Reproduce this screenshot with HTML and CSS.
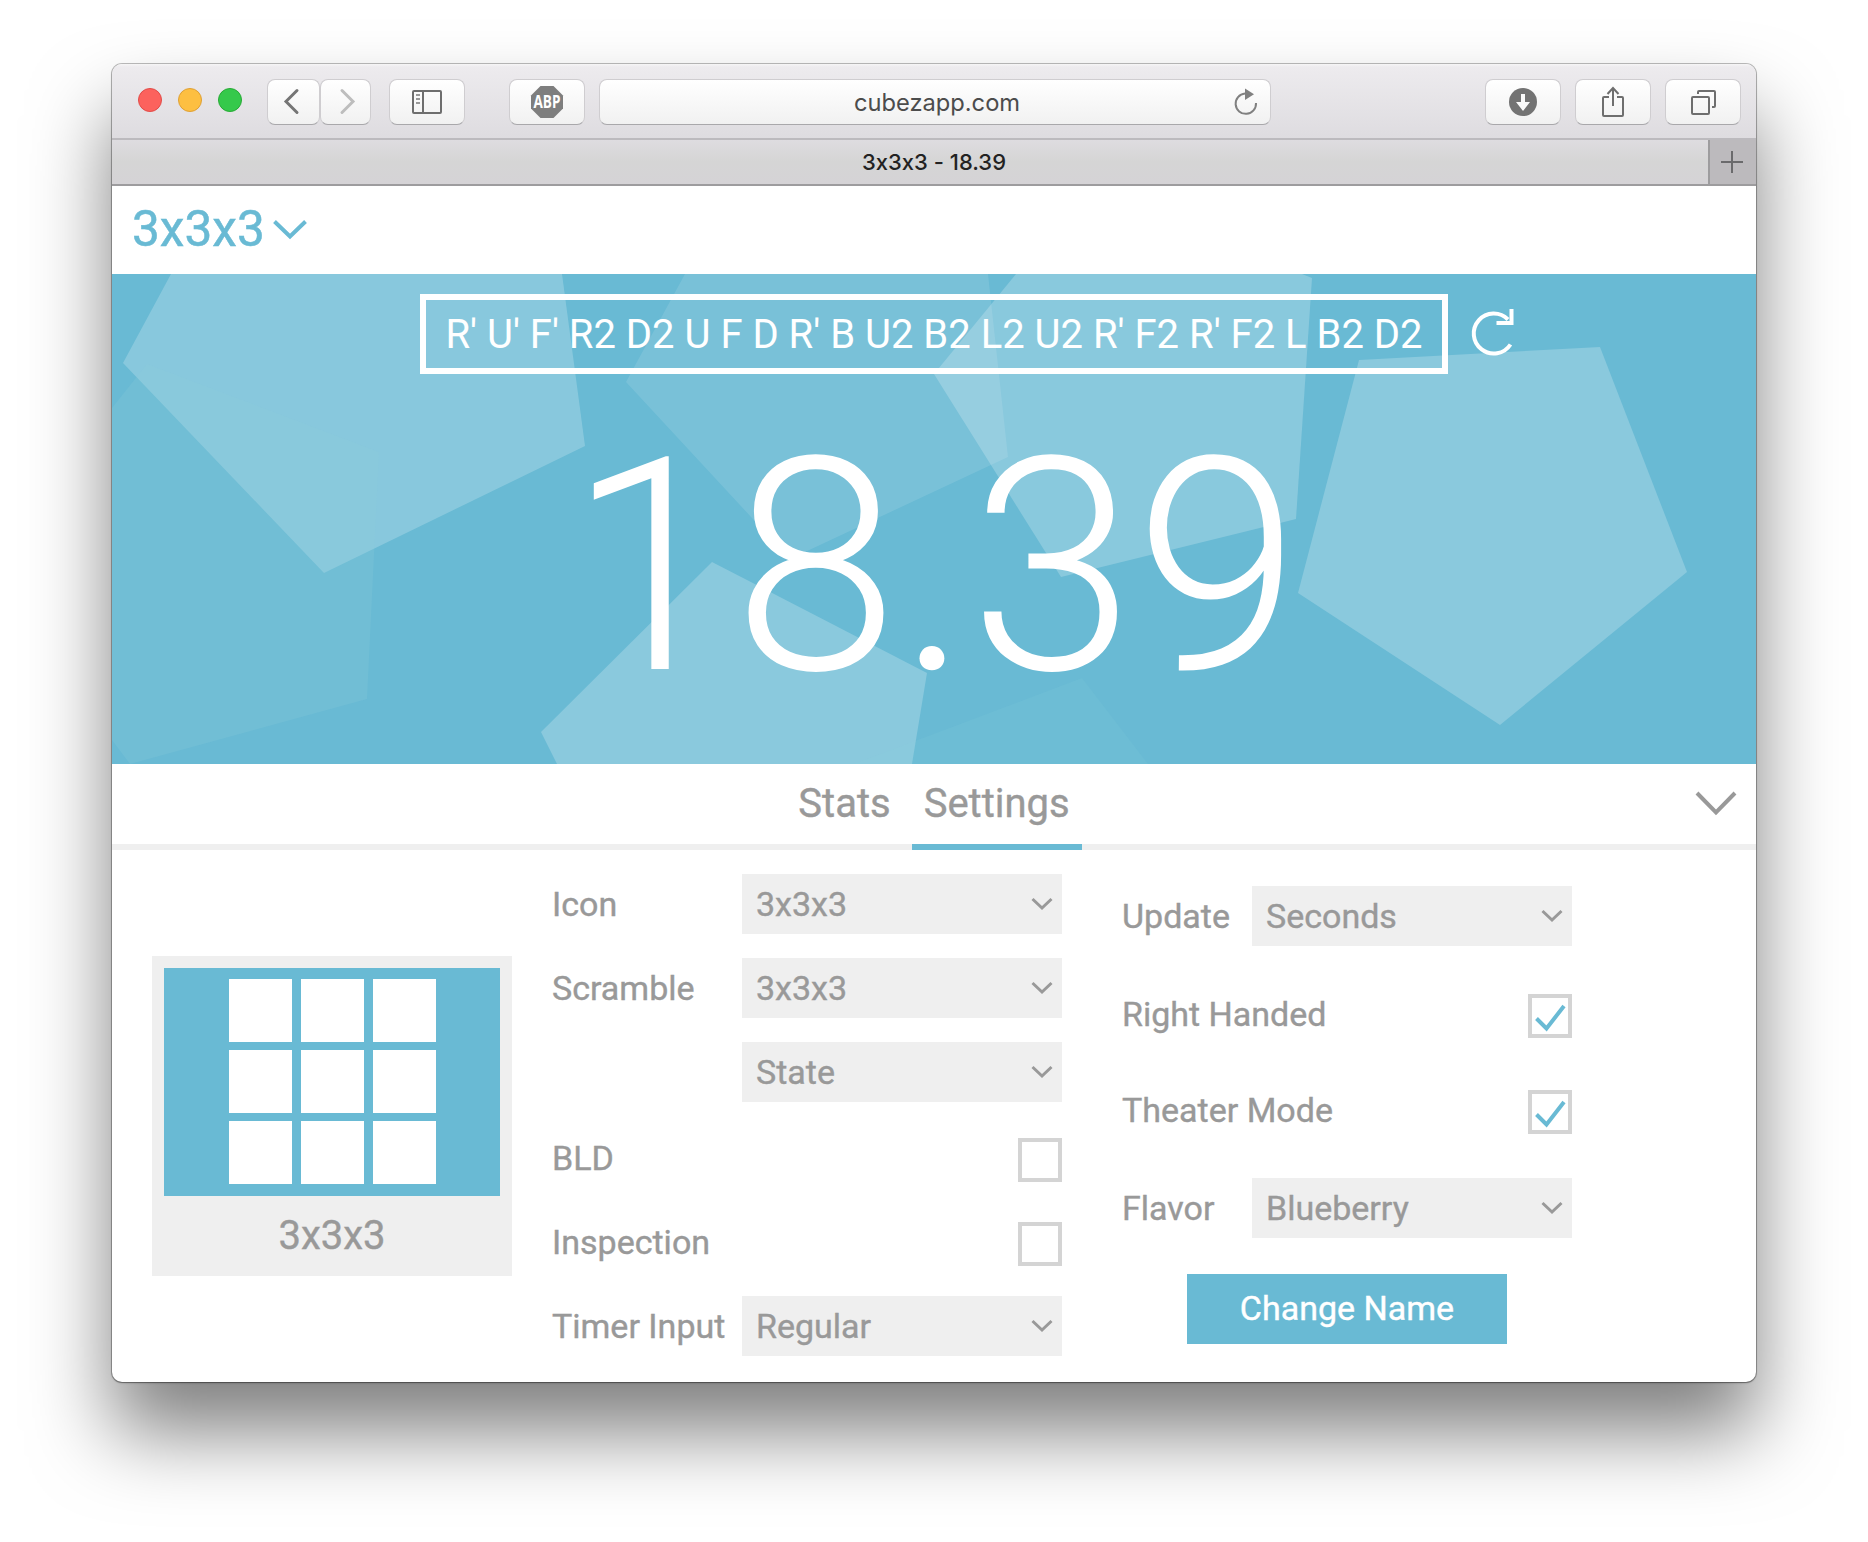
FILE: index.html
```html
<!DOCTYPE html>
<html lang="en">
<head>
<meta charset="utf-8">
<title>3x3x3 - 18.39</title>
<link rel="stylesheet" href="styles.css">
</head>
<body>
<div class="window">
  <header class="toolbar">
    <div class="lights"><i class="light red"></i><i class="light yellow"></i><i class="light green"></i></div>
    <div class="btn back"><svg width="52" height="44" fill="none" stroke="#757575" stroke-width="3" stroke-linecap="round"><path d="M29 10.500L18 21.500L29 32.500"/></svg></div>
    <div class="btn forward"><svg width="50" height="44" fill="none" stroke="#bdbdbd" stroke-width="3" stroke-linecap="round"><path d="M21 10.500L32 21.500L21 32.500"/></svg></div>
    <div class="btn sidebar"><svg width="30" height="24" fill="none" stroke="#6e6e6e" stroke-width="2"><rect x="1" y="1" width="28" height="22" rx="1"/><path d="M11 1V23"/><path d="M4 5H8M4 9H8M4 13H8" stroke="#999"/></svg></div>
    <div class="btn abp"><svg width="32" height="32"><path d="M9.500 0H22.500L32 9.500V22.500L22.500 32H9.500L0 22.500V9.500Z" fill="#7e7e7e"/><text class="abp-text" x="16" y="22" text-anchor="middle" textLength="27" lengthAdjust="spacingAndGlyphs">ABP</text></svg></div>
    <div class="url"><span>cubezapp.com</span>
      <svg class="reload" width="24" height="28" fill="none" stroke="#808080" stroke-width="2"><path d="M11 5.500A10.200 10.200 0 1 0 22 15"/><path d="M11 0.500V12L20 6.200Z" fill="#808080" stroke="none"/></svg>
    </div>
    <div class="btn download"><svg width="28" height="28"><circle cx="14" cy="14" r="14" fill="#737373"/><path d="M12 6H16V14H21L14 23L7 14H12Z" fill="#fafafa"/></svg></div>
    <div class="btn share"><svg width="24" height="32" fill="none" stroke="#6e6e6e" stroke-width="2"><path d="M8 11H3Q2 11 2 12V29Q2 30 3 30H21Q22 30 22 29V12Q22 11 21 11H16M12 20V2M6.500 8L12 2L17.500 8"/></svg></div>
    <div class="btn tabs"><svg width="26" height="26" fill="none" stroke="#6e6e6e" stroke-width="2"><rect x="2" y="8" width="17" height="17" rx="1"/><path d="M8 5V3Q8 2 9 2H24Q25 2 25 3V17Q25 18 24 18H22"/></svg></div>
  </header>
  <div class="tabbar">
    <div class="tab-title">3x3x3 - 18.39</div>
    <div class="tab-add"><svg width="22" height="22" stroke="#6a6a6c" stroke-width="2"><path d="M11 0V22M0 11H22"/></svg></div>
  </div>
  <div class="event">
    <span>3x3x3</span>
    <svg width="34" height="20" fill="none" stroke="#69bad4" stroke-width="4"><path d="M1.500 1.500L17 16.500L32.500 1.500"/></svg>
  </div>
  <section class="hero">
    <svg class="shapes" width="1644" height="490">
      <g fill="#fff">
        <path fill-opacity=".21" d="M59 0L11 89L212 299L473 172L450 0Z"/>
        <path fill="#8ccbdc" fill-opacity=".22" d="M35 90L267 178L255 425L18 490L0 466V134Z"/>
        <path fill-opacity=".11" d="M573 0L514 108L678 285L896 183L876 0Z"/>
        <path fill-opacity=".215" d="M904 0L822 100L949 303L1184 245L1200 4L1190 0Z"/>
        <path fill-opacity=".22" d="M1247 86L1488 73L1575 298L1388 451L1186 319Z"/>
        <path fill-opacity=".22" d="M600 288L429 458L445 490H800L815 399Z"/>
        <path fill="#8cd8dc" fill-opacity=".12" d="M970 404L1036 490H742Z"/>
      </g>
    </svg>
    <div class="scramble-row">
      <div class="scramble">R' U' F' R2 D2 U F D R' B U2 B2 L2 U2 R' F2 R' F2 L B2 D2</div>
      <svg class="refresh" width="44" height="50" fill="none" stroke="#fff" stroke-width="4"><path d="M38.500 36.500A20 20 0 1 1 36 11.500"/><path d="M39.500 1V15H24.500"/></svg>
    </div>
    <div class="time">18.39</div>
  </section>
  <nav class="nav">
    <span class="nav-item">Stats</span><span class="nav-item active">Settings</span>
    <svg class="collapse" width="42" height="26" fill="none" stroke="#999" stroke-width="4"><path d="M2 2L21 21.500L40 2"/></svg>
  </nav>
  <main class="settings">
    <div class="card">
      <div class="cube"><i></i><i></i><i></i><i></i><i></i><i></i><i></i><i></i><i></i></div>
      <div class="card-name">3x3x3</div>
    </div>
    <div class="left">
      <div class="row"><label>Icon</label><div class="select">3x3x3<svg class="chev" width="22" height="14"><path d="M1.500 2L11 11L20.500 2"/></svg></div></div>
      <div class="row"><label>Scramble</label><div class="select">3x3x3<svg class="chev" width="22" height="14"><path d="M1.500 2L11 11L20.500 2"/></svg></div></div>
      <div class="row"><label></label><div class="select">State<svg class="chev" width="22" height="14"><path d="M1.500 2L11 11L20.500 2"/></svg></div></div>
      <div class="row spaced"><label>BLD</label><div class="check"></div></div>
      <div class="row"><label>Inspection</label><div class="check"></div></div>
      <div class="row"><label>Timer Input</label><div class="select">Regular<svg class="chev" width="22" height="14"><path d="M1.500 2L11 11L20.500 2"/></svg></div></div>
    </div>
    <div class="right">
      <div class="row"><label>Update</label><div class="select">Seconds<svg class="chev" width="22" height="14"><path d="M1.500 2L11 11L20.500 2"/></svg></div></div>
      <div class="row spaced"><label>Right Handed</label><div class="check"><svg width="32" height="28"><path d="M2.500 14.500L12.500 24.500L30 2"/></svg></div></div>
      <div class="row"><label>Theater Mode</label><div class="check"><svg width="32" height="28"><path d="M2.500 14.500L12.500 24.500L30 2"/></svg></div></div>
      <div class="row spaced"><label>Flavor</label><div class="select">Blueberry<svg class="chev" width="22" height="14"><path d="M1.500 2L11 11L20.500 2"/></svg></div></div>
      <div class="change">Change Name</div>
    </div>
  </main>
</div>
</body>
</html>
```
FILE: styles.css
```css
* { box-sizing: border-box; }
body { margin: 0; padding: 64px 112px 0; height: 1542px; overflow: hidden; background: #fff; font-family: Roboto, sans-serif; color: #999; }
svg { display: block; flex: none; overflow: visible; }
.window { width: 1644px; height: 1318px; border-radius: 10px; overflow: hidden; background: #fff; box-shadow: 0 0 0 1px rgba(0,0,0,.25), 0 1px 2px rgba(0,0,0,.3), 0 50px 80px rgba(0,0,0,.5); }
.toolbar { display: flex; height: 74px; padding-top: 15px; background: linear-gradient(#f6f5f6, #edebee 3px, #dedce0); }
.lights { display: flex; gap: 16px; margin: 12px 25px 0 26px; margin-top: 9px; }
.light { width: 24px; height: 24px; border-radius: 50%; border: 1px solid #e24b48; background: #fc625d; }
.yellow { background: #fdbf41; border-color: #dfa035; }
.green { background: #35c94b; border-color: #27aa35; }
.btn, .url { height: 46px; border-radius: 8px; border: 1px solid #cfcdd0; border-bottom-color: #a9a8ab; background: linear-gradient(#fff, #f1f1f1); display: flex; align-items: center; justify-content: center; flex: none; }
.btn { width: 76px; }
.back { width: 53px; }
.forward { width: 51px; }
.sidebar { margin-left: 18px; }
.abp { margin-left: 44px; }
.abp-text { font: 700 17px "Open Sans", sans-serif; fill: #fff; }
.url { width: 672px; margin-left: 14px; padding: 2px 0 0 4px; position: relative; font: 23.700px/42px Inter, sans-serif; color: #4c4c4c; }
.reload { position: absolute; right: 12px; top: 8px; }
.download { margin-left: 214px; }
.share, .tabs { margin-left: 14px; }
.tabbar { display: flex; height: 48px; border-top: 2px solid #bcbabe; border-bottom: 2px solid #9d9c9e; background: linear-gradient(#dedce0, #d5d5d5 50%, #d5d3d6); }
.tab-title { flex: 1; padding-left: 48px; text-align: center; font: 500 22px/44px Inter, sans-serif; font-feature-settings: "calt" 0; color: #222; }
.tab-add { width: 48px; border-left: 2px solid #9d9c9e; padding: 0 2px 1px 0; background: #bcbabd; display: flex; align-items: center; justify-content: center; }
.event { height: 88px; display: flex; align-items: center; gap: 8px; padding-left: 20px; font-size: 49.600px; color: #69bad4; }
.event span { margin-top: -2px; -webkit-text-stroke: .5px; }
.hero { height: 490px; background: #69bad4; position: relative; color: #fff; padding-top: 20px; }
.shapes { position: absolute; left: 0; top: 0; overflow: hidden; }
.scramble-row { position: relative; display: flex; padding-left: 308px; gap: 24px; }
.scramble { width: 1028px; height: 80px; border: 6px solid #fff; text-align: center; white-space: nowrap; font-size: 40px; line-height: 70px; }
.refresh { margin-top: 14px; }
.time { position: relative; margin-top: 44px; text-align: center; font-size: 298px; font-weight: 300; line-height: 300px; }
.nav { height: 86px; border-bottom: 6px solid #efefef; display: flex; justify-content: center; gap: 9px; position: relative; font-size: 40px; -webkit-text-stroke: .4px; }
.nav-item { height: 86px; line-height: 80px; padding: 0 12px; }
.active { border-bottom: 6px solid #69bad4; }
.collapse { position: absolute; right: 19px; top: 27px; }
.settings { display: flex; font-size: 34px; -webkit-text-stroke: .4px; }
.card { width: 360px; height: 320px; margin: 106px 40px 0; padding: 12px; background: #efefef; }
.cube { height: 228px; padding: 11px 0 0 1px; background: #69bad4; display: grid; grid-template-columns: repeat(3, 63px); grid-template-rows: repeat(3, 63px); gap: 8px 9px; justify-content: center; }
.cube i { background: #fff; }
.card-name { height: 80px; line-height: 80px; text-align: center; font-size: 40px; }
.left { width: 510px; padding-top: 12px; }
.right { width: 450px; margin-left: 60px; padding-top: 18px; }
.row { height: 84px; display: flex; align-items: center; justify-content: space-between; white-space: nowrap; }
.right .row { height: 96px; }
.spaced, .right .spaced { margin-top: 2px; }
.select { width: 320px; height: 60px; background: #efefef; padding: 0 9px 0 14px; display: flex; align-items: center; justify-content: space-between; }
.chev path { fill: none; stroke: #999; stroke-width: 3; }
.check { width: 44px; height: 44px; border: 4px solid #d4d4d4; margin-top: 4px; padding: 6px 0 0 2px; }
.check path { fill: none; stroke: #69bad4; stroke-width: 4; }
.change { width: 320px; height: 70px; line-height: 68px; margin: 18px 0 0 65px; background: #69bad4; color: #fff; text-align: center; }
```
